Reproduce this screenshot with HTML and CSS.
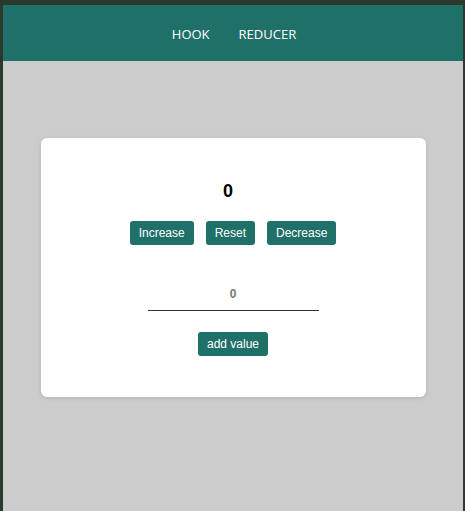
FILE: index.html
```html
<!DOCTYPE html>
<html>
<head>
<meta charset="utf-8">
<link rel="stylesheet" href="styles.css">
</head>
<body>
<div class="frame">
  <header class="topbar">
    <nav class="nav">
      <a class="nav-link">HOOK</a>
      <a class="nav-link">REDUCER</a>
    </nav>
  </header>
  <main class="main">
    <section class="card">
      <div class="count">0</div>
      <div class="btn-row">
        <button class="btn">Increase</button>
        <button class="btn">Reset</button>
        <button class="btn">Decrease</button>
      </div>
      <input class="value-input" type="text" placeholder="0">
      <button class="btn">add value</button>
    </section>
  </main>
</div>
</body>
</html>
```
FILE: styles.css
```css
html, body {
  margin: 0;
  padding: 0;
  height: 100%;
}
body {
  background: #2d382c;
  font-family: "Liberation Sans", Arial, sans-serif;
}
.frame {
  margin: 5px 2px 0 3px;
  height: calc(100% - 5px);
  background: #cccccc;
  display: flex;
  flex-direction: column;
}
.topbar {
  height: 56px;
  background: #1f7068;
  display: flex;
  align-items: center;
  justify-content: center;
}
.nav {
  display: flex;
  gap: 29px;
  padding-top: 1px;
  padding-left: 2px;
}
.nav-link {
  color: #ffffff;
  font-family: "Open Sans", sans-serif;
  font-size: 13px;
}
.main {
  padding-top: 77px;
  display: flex;
  justify-content: center;
}
.card {
  width: 385px;
  box-sizing: border-box;
  background: #ffffff;
  border-radius: 6px;
  box-shadow: 0 1px 4px rgba(0,0,0,0.12);
  padding: 43px 0 41px;
  display: flex;
  flex-direction: column;
  align-items: center;
}
.count {
  font-size: 18px;
  font-weight: bold;
  line-height: 21px;
  color: #000;
  margin-right: 10px;
}
.btn-row {
  display: flex;
  gap: 12px;
  margin-top: 19px;
}
.btn {
  height: 24px;
  padding: 0 9px;
  border: none;
  border-radius: 3px;
  background: #1f7068;
  color: #ffffff;
  font-family: "Liberation Sans", Arial, sans-serif;
  font-size: 12px;
}
.value-input {
  margin-top: 35px;
  margin-bottom: 21px;
  width: 171px;
  height: 31px;
  box-sizing: border-box;
  border: none;
  border-bottom: 1px solid #333;
  padding: 0 0 3px;
  text-align: center;
  font-family: "Liberation Sans", Arial, sans-serif;
  font-size: 12px;
  font-weight: bold;
  outline: none;
}
.value-input::placeholder {
  color: #777;
}
```
